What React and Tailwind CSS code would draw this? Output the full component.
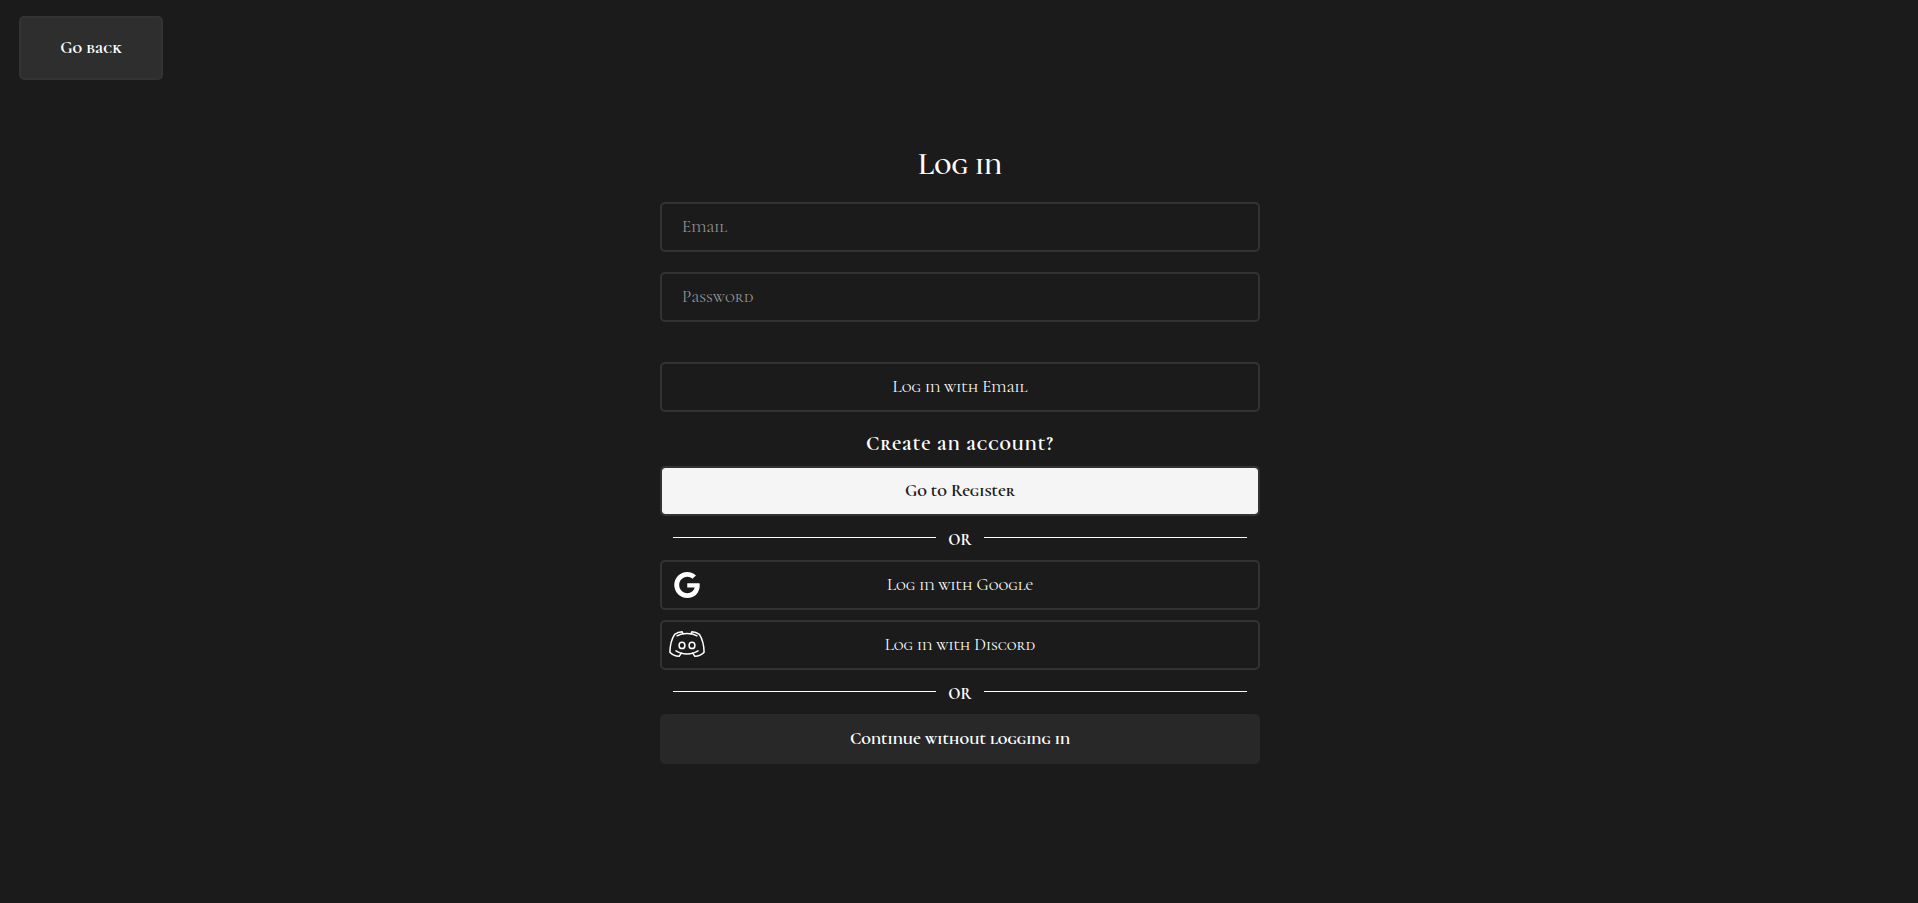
const boxed =
  "flex h-[50px] w-full items-center justify-center rounded-[5px] border-2 border-[#333333] text-[17px]";

const field =
  "h-[50px] w-full rounded-[5px] border-2 border-[#333333] bg-transparent px-5 pb-0.5 text-[17px] placeholder:text-[#969696]";

function Divider() {
  return (
    <div className="flex h-11 items-center gap-3 px-[13px]">
      <span className="mb-0.5 h-px flex-1 bg-white" />
      <span className="pt-1 text-base leading-5 font-bold">OR</span>
      <span className="mb-0.5 h-px flex-1 bg-white" />
    </div>
  );
}

function GoogleIcon() {
  return (
    <svg viewBox="0 0 24 24" className="h-[26px] w-[26px]" fill="#fff" aria-hidden="true">
      <path d="M12.24 10.285V14.4h6.806c-.275 1.765-2.056 5.174-6.806 5.174-4.095 0-7.439-3.389-7.439-7.574s3.345-7.574 7.439-7.574c2.33 0 3.891.989 4.785 1.849l3.254-3.138C18.189 1.186 15.479 0 12.24 0c-6.635 0-12 5.365-12 12s5.365 12 12 12c6.926 0 11.52-4.869 11.52-11.726 0-.788-.085-1.39-.189-1.989H12.24z" />
    </svg>
  );
}

function DiscordIcon() {
  return (
    <svg
      viewBox="0 0 36 28"
      className="h-7 w-9"
      fill="none"
      stroke="#fff"
      strokeWidth="1.5"
      strokeLinecap="round"
      strokeLinejoin="round"
      aria-hidden="true"
    >
      <path d="M8 4.8c2.800-1.500 6-2.200 10-2.200s7.200.7 10 2.200" />
      <path d="M14 2.700 13.200.8C10.500 1 7.800 1.900 5.600 3.300 2.800 7.700 1 14.700.9 21.300c2.200 2.600 5.600 3.900 9.200 4l2.200-3.200" />
      <path d="M22 2.700 22.800.8c2.700.2 5.400 1.100 7.600 2.500 2.800 4.400 4.600 11.400 4.700 18-2.200 2.600-5.600 3.900-9.200 4l-2.200-3.200" />
      <path d="M7 19.900c3 2 6.800 3 11 3s8-1 11-3" />
      <ellipse cx="13" cy="14.400" rx="2.900" ry="3.200" />
      <ellipse cx="23" cy="14.400" rx="2.900" ry="3.200" />
    </svg>
  );
}

function ProviderButton({ icon, children }) {
  return (
    <button type="button" className={`${boxed} relative`}>
      <span className="absolute inset-y-0 left-0 flex w-[50px] items-center justify-center">{icon}</span>
      {children}
    </button>
  );
}

export default function App() {
  return (
    <div className="min-h-screen bg-[#1b1b1b] pt-4 pr-[17px] pb-12 pl-[19px] font-['Cormorant_Unicase','Liberation_Serif',serif] text-white">
      <button
        type="button"
        className="flex h-16 w-36 items-center justify-center rounded-[5px] border-2 border-[#333333] bg-[#2e2e2e] text-[17px] font-bold"
      >
        Go back
      </button>

      <main className="mx-auto mt-[65px] w-full max-w-[600px]">
        <h1 className="mb-[17px] text-center text-[30px] leading-10 font-semibold">Log in</h1>

        <form onSubmit={(event) => event.preventDefault()}>
          <div className="flex flex-col gap-5">
            <input type="email" aria-label="Email" placeholder="Email" className={field} />
            <input type="password" aria-label="Password" placeholder="Password" className={field} />
          </div>
          <button type="submit" className={`${boxed} mt-10`}>
            Log in with Email
          </button>
        </form>

        <h2 className="pt-[17px] pb-[7px] text-center text-xl leading-[30px] font-bold tracking-wider">
          Create an account?
        </h2>
        <button type="button" className={`${boxed} bg-[#f5f5f5] bg-clip-padding font-bold text-[#1b1b1b]`}>
          Go to Register
        </button>

        <Divider />

        <div className="flex flex-col gap-2.5">
          <ProviderButton icon={<GoogleIcon />}>Log in with Google</ProviderButton>
          <ProviderButton icon={<DiscordIcon />}>Log in with Discord</ProviderButton>
        </div>

        <Divider />

        <button
          type="button"
          className="flex h-[50px] w-full items-center justify-center rounded-[5px] bg-[#282828] text-[17px] font-bold"
        >
          Continue without logging in
        </button>
      </main>
    </div>
  );
}
